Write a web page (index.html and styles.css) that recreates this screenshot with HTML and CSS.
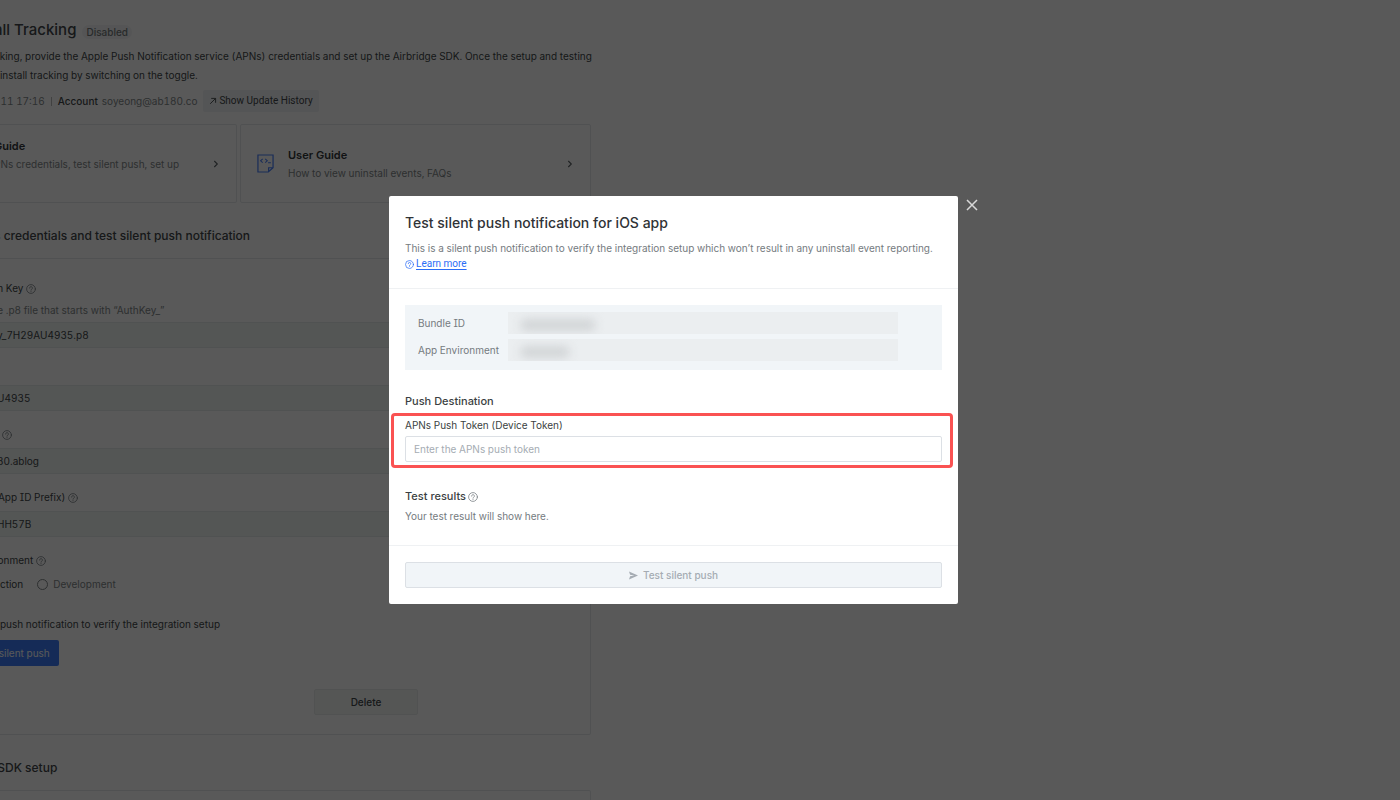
FILE: index.html
```html
<!DOCTYPE html>
<html lang="en">
<head>
<meta charset="utf-8">
<title>Uninstall Tracking</title>
<link rel="stylesheet" href="styles.css">
</head>
<body>
<svg class="sprite" aria-hidden="true">
  <symbol id="help" viewBox="0 0 10 10"><g fill="none" stroke="currentColor" stroke-width=".8" stroke-linecap="round"><circle cx="5" cy="5" r="4.4"/><path d="M3.600 4.100a1.400 1.400 0 1 1 2 1.200c-.4.2-.6.4-.6.8"/></g><circle cx="5" cy="7.300" r=".5" fill="currentColor"/></symbol>
  <symbol id="chevron" viewBox="0 0 8 8"><path d="M2.300 1l3 3-3 3" fill="none" stroke="currentColor" stroke-width="1.100"/></symbol>
</svg>
<main class="page">
  <header class="head">
    <div class="title-row"><h1 class="title">all Tracking</h1><span class="badge">Disabled</span></div>
    <p class="intro">cking, provide the Apple Push Notification service (APNs) credentials and set up the Airbridge SDK. Once the setup and testing<br>ninstall tracking by switching on the toggle.</p>
    <div class="meta">
      <span class="muted">-11 17:16</span><span class="bar"></span><span class="meta-label">Account</span><span class="muted">soyeong@ab180.co</span>
      <button class="history" type="button"><svg class="arrow" viewBox="0 0 8 8"><path d="M1.200 6.800L6.500 1.500M2.200 1.400h4.400v4.400" fill="none" stroke="currentColor" stroke-width=".9"/></svg>Show Update History</button>
    </div>
  </header>
  <div class="cards">
    <a class="card card-first" href="#setup"><span class="card-text"><strong class="card-title">Guide</strong><span class="card-sub">PNs credentials, test silent push, set up</span></span><svg class="chev"><use href="#chevron"/></svg></a>
    <a class="card" href="#guide"><svg class="doc" viewBox="0 0 18 20"><g fill="none" stroke="currentColor" stroke-width="1.300"><path d="M1 1h16v13.500L12 19H1zM17 14.500h-4.700V19"/><path d="M6 5L3.800 7.100 6 9.200M8.700 5l2.200 2.100-2.200 2.100M11.700 9.300h3" stroke-width="1.100"/></g></svg><span class="card-text"><strong class="card-title">User Guide</strong><span class="card-sub">How to view uninstall events, FAQs</span></span><svg class="chev"><use href="#chevron"/></svg></a>
  </div>
  <h2 class="section">s credentials and test silent push notification</h2>
  <section class="panel">
    <div class="field"><label class="label" for="key">th Key <svg class="help"><use href="#help"/></svg></label>
      <p class="hint">te .p8 file that starts with “AuthKey_”</p>
      <input class="input" id="key" value="y_7H29AU4935.p8" readonly></div>
    <div class="field"><label class="label" for="keyid">&nbsp;</label><input class="input" id="keyid" value="U4935" readonly></div>
    <div class="field"><label class="label" for="bundle">&nbsp;&nbsp; <svg class="help"><use href="#help"/></svg></label><input class="input" id="bundle" value="80.ablog" readonly></div>
    <div class="field"><label class="label" for="team">(App ID Prefix) <svg class="help"><use href="#help"/></svg></label><input class="input" id="team" value="HH57B" readonly></div>
    <div class="label">ronment <svg class="help"><use href="#help"/></svg></div>
    <div class="radios"><span>uction</span><label class="radio"><input type="radio" name="env">Development</label></div>
    <p class="verify">t push notification to verify the integration setup</p>
    <button class="primary" type="button">&nbsp;silent push</button>
    <div class="actions"><button class="delete" type="button">Delete</button></div>
  </section>
  <h2 class="section">&nbsp;SDK setup</h2>
  <section class="panel"></section>
</main>
<div class="overlay">
  <div class="modal" role="dialog" aria-labelledby="modal-title">
    <button class="close" type="button" aria-label="Close"><svg viewBox="0 0 12 12"><path d="M1 1l10 10M11 1L1 11" stroke="currentColor" stroke-width="1.500"/></svg></button>
    <header class="modal-head">
      <h2 class="modal-title" id="modal-title">Test silent push notification for iOS app</h2>
      <p class="modal-desc">This is a silent push notification to verify the integration setup which won’t result in any uninstall event reporting.</p>
      <div class="learn"><svg class="help"><use href="#help"/></svg><a href="#learn">Learn more</a></div>
    </header>
    <div class="modal-body">
      <dl class="info">
        <dt>Bundle ID</dt><dd><span class="redacted redacted-wide"></span></dd>
        <dt>App Environment</dt><dd><span class="redacted redacted-short"></span></dd>
      </dl>
      <h3 class="sub">Push Destination</h3>
      <div class="token"><label for="token">APNs Push Token (Device Token)</label><input class="token-input" id="token" type="text" placeholder="Enter the APNs push token"></div>
      <h3 class="sub">Test results <svg class="help"><use href="#help"/></svg></h3>
      <p class="result">Your test result will show here.</p>
    </div>
    <footer class="modal-foot"><button class="send" type="button" disabled><svg viewBox="0 0 10 10"><path d="M0 .5L10 5 0 9.500l1.200-3.700L6 5 1.200 4.200z" fill="currentColor"/></svg>Test silent push</button></footer>
  </div>
</div>
</body>
</html>
```
FILE: styles.css
```css
* { box-sizing: border-box; }
body { margin: 0; height: 100vh; overflow: hidden; background: #fff; color: #42474a; font: 10px/16px Inter, "Liberation Sans", sans-serif; font-feature-settings: "tnum", "cv08"; }
h1, h2, h3, p, dl, dd { margin: 0; }
button, input { font: inherit; color: inherit; font-feature-settings: inherit; }
.sprite { position: absolute; width: 0; height: 0; }
.help { width: 10px; height: 10px; vertical-align: -2px; color: #7b8187; }
.page { width: 597px; margin-left: -6px; }
.head { padding-top: 20px; }
.title-row { display: flex; align-items: center; gap: 6px; height: 20px; }
.title { font-size: 15px; font-weight: 500; line-height: 20px; }
.badge { padding: 0 4px; border-radius: 7px; background: #f2f4f5; color: #757b7c; line-height: 14px; font-weight: 500; margin-top: 3px; }
.intro { margin-top: 7px; line-height: 19px; white-space: nowrap; }
.meta { display: flex; align-items: center; height: 22px; margin-top: 5px; }
.muted { color: #82888a; }
.bar { width: 1px; height: 9px; margin: 0 6px; background: #bbb; }
.meta-label { font-weight: 500; margin-right: 4px; }
.history { display: flex; align-items: center; gap: 2px; height: 22px; margin-left: 6px; padding: 0 6px; border: 0; border-radius: 2px; background: #f0f3f6; font-family: Roboto, Inter, sans-serif; }
.arrow { width: 8px; height: 8px; }
.cards { display: grid; grid-template-columns: 243px 1fr; gap: 3px; margin-top: 12px; }
.card { display: flex; align-items: center; height: 79px; padding: 0 16px; border: 1px solid #e6e9eb; border-radius: 2px; color: inherit; text-decoration: none; }
.card-first { border-left: 0; padding-left: 0; }
.card-first .card-text { min-height: 54px; }
.card-text { display: flex; flex-direction: column; flex: 1; line-height: 18px; }
.card-title { font-size: 11px; font-weight: 600; color: #33373a; }
.card-sub { color: #82888a; }
.doc { width: 17px; height: 19px; margin-right: 14px; color: #4a80fa; }
.chev { width: 8px; height: 8px; color: #5a6063; }
.section { margin: 23px 0 12px; font-size: 12px; font-weight: 500; line-height: 20px; }
.panel { border: 1px solid #e6e9eb; border-left: 0; border-radius: 2px; padding: 21px 16px 19px 0; }
.label { display: block; height: 16px; }
.field { margin-bottom: 15px; }
.hint { color: #82888a; margin: 6px 0 4px; }
.input { display: block; width: 100%; height: 26px; margin-top: 6px; padding: 0 0 0 3px; border: 1px solid #e6ebea; border-left: 0; background: #f0f5f3; outline: 0; }
.hint + .input { margin-top: 4px; }
.radios { display: flex; gap: 14px; margin-top: 8px; height: 16px; align-items: center; }
.radio { display: flex; align-items: center; gap: 5px; color: #82888a; }
.radio input { appearance: none; width: 11px; height: 11px; margin: 0; border: 1px solid #82888a; border-radius: 50%; }
.verify { margin: 24px 0 8px; }
.primary { display: block; height: 26px; padding: 0 9px 0 2px; border: 0; border-radius: 0 2px 2px 0; background: #3c7cf8; color: #fff; }
.actions { display: flex; justify-content: flex-end; margin-top: 23px; padding-right: 156px; }
.delete { width: 104px; height: 26px; border: 1px solid #e8eceb; border-radius: 2px; background: #f2f6f4; font-weight: 500; }
.overlay { position: fixed; inset: 0; display: flex; align-items: center; justify-content: center; padding-right: 53px; background: rgba(0, 0, 0, .65); }
.modal { position: relative; width: 569px; border-radius: 2px; background: #fff; }
.close { position: absolute; left: 100%; top: 3px; width: 28px; height: 12px; padding: 0 8px; border: 0; background: none; color: #d8d8d8; }
.close svg { display: block; width: 12px; height: 12px; }
.modal-head { padding: 17px 16px 16px; border-bottom: 1px solid #eff1f3; }
.modal-title { font-size: 14px; line-height: 20px; font-weight: 500; color: #303336; }
.modal-desc { margin-top: 7px; color: #757b80; white-space: nowrap; }
.learn { display: flex; align-items: center; gap: 2px; color: #2b6df6; font-family: Roboto, Inter, sans-serif; }
.learn .help { color: inherit; width: 9px; height: 9px; }
.learn a { color: inherit; text-underline-offset: 2px; }
.modal-body { padding: 16px 16px 21px; }
.info { display: grid; grid-template-columns: 90px 1fr; gap: 5px 0; margin-bottom: 23px; padding: 7px 44px 9px 13px; background: #f1f5f8; color: #757b80; line-height: 22px; }
.info dt, .info dd { height: 22px; }
.info dd { background: #ebeef0; padding: 0 12px; overflow: hidden; }
.redacted { display: block; height: 12px; margin-top: 7px; border-radius: 6px; background: #d2d5d7; filter: blur(5px); }
.redacted-wide { width: 76px; }
.redacted-short { width: 50px; }
.sub { font-size: 11px; line-height: 16px; font-weight: 500; color: #3b3f42; }
.token { position: relative; margin: 8px 0 26px; color: #3b3f42; }
.token::after { content: ""; position: absolute; inset: -4px -11px -6px -14px; border: 3px solid #fa5252; border-radius: 4px; pointer-events: none; }
.token label { display: block; }
.token-input { display: block; width: 100%; height: 26px; margin-top: 3px; padding: 0 8px; border: 1px solid #dce0e5; border-radius: 2px; }
.token-input::placeholder { color: #a5acb3; opacity: 1; }
.sub .help { margin-left: -1px; }
.result { margin-top: 4px; color: #757b80; }
.modal-foot { padding: 16px; border-top: 1px solid #eff1f3; }
.send { display: flex; align-items: center; justify-content: center; gap: 5px; width: 100%; height: 26px; border: 1px solid #dce0e5; border-radius: 2px; background: #f1f5f8; color: #a5acb3; font-weight: 500; }
.send svg { width: 9px; height: 9px; }
```
